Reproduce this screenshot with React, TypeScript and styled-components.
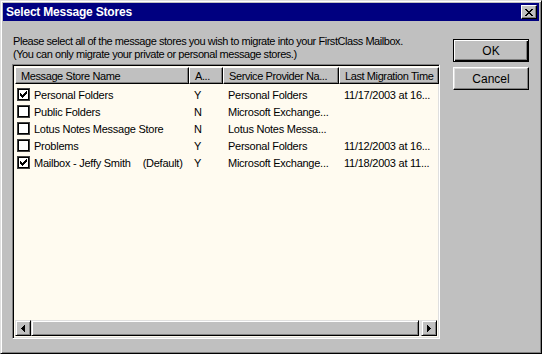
import React from "react";
import styled, { createGlobalStyle } from "styled-components";

const GlobalStyle = createGlobalStyle`
  html, body { margin: 0; padding: 0; background: #c0c0c0; }
  body { font-family: "Liberation Sans", Arial, sans-serif; font-size: 11px; letter-spacing: -0.25px; }
`;

const Window = styled.div`
  width: 542px;
  height: 354px;
  box-sizing: border-box;
  background: #c0c0c0;
  border-style: solid;
  border-width: 1px;
  border-color: #dfdfdf #000 #000 #dfdfdf;
  box-shadow: inset 1px 1px 0 #fff, inset -1px -1px 0 #808080;
  padding: 2px;
  display: flex;
  flex-direction: column;
`;

const TitleBar = styled.div`
  height: 18px;
  background: #000080;
  display: flex;
  align-items: center;
  justify-content: space-between;
  padding: 0 2px 0 3px;
`;

const Title = styled.span`
  color: #fff;
  font-weight: bold;
  font-size: 12px;
  letter-spacing: -0.2px;
`;

const CloseButton = styled.div`
  width: 16px;
  height: 14px;
  box-sizing: border-box;
  background: #c0c0c0;
  border-style: solid;
  border-width: 1px;
  border-color: #fff #000 #000 #fff;
  box-shadow: inset -1px -1px 0 #808080;
  display: flex;
  align-items: center;
  justify-content: center;
`;

const Body = styled.div`
  flex: 1;
  display: flex;
  justify-content: space-between;
  padding: 14px 10px 12px 9px;
`;

const Main = styled.div`
  display: flex;
  flex-direction: column;
`;

const Intro = styled.p`
  margin: 0 0 3px 1px;
  line-height: 13px;
  color: #000;
  white-space: nowrap;
  letter-spacing: -0.45px;
`;

const ListFrame = styled.div`
  flex: 1;
  width: 428px;
  box-sizing: border-box;
  border-style: solid;
  border-width: 1px;
  border-color: #808080 #fff #fff #808080;
  box-shadow: inset 1px 1px 0 #000, inset -1px -1px 0 #dfdfdf;
  padding: 2px;
  background: #fffbf0;
  display: flex;
  flex-direction: column;
`;

const Grid = styled.div`
  flex: 1;
  display: flex;
  flex-direction: column;
`;

const HeaderRow = styled.div`
  display: grid;
  grid-template-columns: 174px 34px 116px 100px;
  height: 17px;
`;

const HeaderCell = styled.div`
  box-sizing: border-box;
  background: #c0c0c0;
  border-style: solid;
  border-width: 1px;
  border-color: #fff #000 #000 #fff;
  box-shadow: inset -1px -1px 0 #808080;
  padding: 1px 0 0 5px;
  line-height: 14px;
  white-space: nowrap;
  overflow: hidden;
  letter-spacing: -0.4px;
`;

const Rows = styled.div`
  padding-top: 2px;
`;

const Row = styled.div`
  display: grid;
  grid-template-columns: 174px 34px 116px 100px;
  height: 17px;
  align-items: center;
`;

const Cell = styled.div<{ $pad?: number }>`
  padding-left: ${(p) => p.$pad ?? 5}px;
  white-space: nowrap;
  display: flex;
  align-items: center;
  gap: 4px;
`;

const Check = styled.div`
  width: 13px;
  height: 13px;
  box-sizing: border-box;
  border: 1px solid #404040;
  box-shadow: inset 0 0 0 1px #000;
  background: #fff;
  display: flex;
  align-items: center;
  justify-content: center;
`;

const Default = styled.span`
  margin-left: 12px;
`;

const ScrollBar = styled.div`
  display: flex;
  height: 16px;
  background: #e0e0e0;
`;

const ArrowButton = styled.div`
  width: 16px;
  height: 16px;
  box-sizing: border-box;
  background: #c0c0c0;
  border-style: solid;
  border-width: 1px;
  border-color: #dfdfdf #000 #000 #dfdfdf;
  box-shadow: inset 1px 1px 0 #fff, inset -1px -1px 0 #808080;
  display: flex;
  align-items: center;
  justify-content: center;
`;

const Thumb = styled.div`
  width: 388px;
  height: 16px;
  box-sizing: border-box;
  background: #c0c0c0;
  border-style: solid;
  border-width: 1px;
  border-color: #dfdfdf #000 #000 #dfdfdf;
  box-shadow: inset 1px 1px 0 #fff, inset -1px -1px 0 #808080;
`;

const Track = styled.div`
  flex: 1;
`;

const Side = styled.div`
  display: flex;
  flex-direction: column;
  gap: 5px;
  padding-top: 4px;
`;

const Button = styled.div<{ $default?: boolean }>`
  width: 76px;
  height: 23px;
  box-sizing: border-box;
  background: #c0c0c0;
  border: 1px solid #000;
  border-color: ${(p) => (p.$default ? "#000" : "#fff #000 #000 #fff")};
  box-shadow: ${(p) =>
    p.$default
      ? "inset 1px 1px 0 #fff, inset -1px -1px 0 #000, inset -2px -2px 0 #808080"
      : "inset -1px -1px 0 #808080, inset 1px 1px 0 #dfdfdf"};
  display: flex;
  align-items: center;
  justify-content: center;
  font-size: 12px;
  letter-spacing: 0;
`;

const CheckMark = () => (
  <svg width="7" height="7" viewBox="0 0 7 7">
    <path d="M0 2h1v1h1v1h1V3h1V2h1V1h1V0h1v3H6v1H5v1H4v1H3v1H2V6H1V5H0z" fill="#000" />
  </svg>
);

const stores = [
  { name: "Personal Folders", checked: true, a: "Y", provider: "Personal Folders", last: "11/17/2003 at 16..." },
  { name: "Public Folders", checked: false, a: "N", provider: "Microsoft Exchange...", last: "" },
  { name: "Lotus Notes Message Store", checked: false, a: "N", provider: "Lotus Notes Messa...", last: "" },
  { name: "Problems", checked: false, a: "Y", provider: "Personal Folders", last: "11/12/2003 at 16..." },
  { name: "Mailbox - Jeffy Smith", checked: true, a: "Y", provider: "Microsoft Exchange...", last: "11/18/2003 at 11...", isDefault: true },
];

export default function App() {
  return (
    <>
      <GlobalStyle />
      <Window>
        <TitleBar>
          <Title>Select Message Stores</Title>
          <CloseButton>
            <svg width="8" height="7" viewBox="0 0 8 7">
              <path d="M0 0h2v1h1v1h2V1h1V0h2v1H7v1H6v1H5v1h1v1h1v1h1v1H6V6H5V5H3v1H2v1H0V6h1V5h1V4h1V3H2V2H1V1H0z" fill="#000" />
            </svg>
          </CloseButton>
        </TitleBar>
        <Body>
          <Main>
            <Intro>
              Please select all of the message stores you wish to migrate into your FirstClass Mailbox.
              <br />
              (You can only migrate your private or personal message stores.)
            </Intro>
            <ListFrame>
              <Grid>
                <HeaderRow>
                  <HeaderCell>Message Store Name</HeaderCell>
                  <HeaderCell>A...</HeaderCell>
                  <HeaderCell>Service Provider Na...</HeaderCell>
                  <HeaderCell>Last Migration Time</HeaderCell>
                </HeaderRow>
                <Rows>
                  {stores.map((s) => (
                    <Row key={s.name}>
                      <Cell $pad={2}>
                        <Check>{s.checked && <CheckMark />}</Check>
                        <span>
                          {s.name}
                          {s.isDefault && <Default>(Default)</Default>}
                        </span>
                      </Cell>
                      <Cell>{s.a}</Cell>
                      <Cell>{s.provider}</Cell>
                      <Cell>{s.last}</Cell>
                    </Row>
                  ))}
                </Rows>
              </Grid>
              <ScrollBar>
                <ArrowButton>
                  <svg width="4" height="7" viewBox="0 0 4 7">
                    <path d="M3 0h1v7H3V6H2V5H1V4H0V3h1V2h1V1h1z" fill="#000" />
                  </svg>
                </ArrowButton>
                <Thumb />
                <Track />
                <ArrowButton>
                  <svg width="4" height="7" viewBox="0 0 4 7">
                    <path d="M0 0h1v1h1v1h1v1h1v1H3v1H2v1H1v1H0z" fill="#000" />
                  </svg>
                </ArrowButton>
              </ScrollBar>
            </ListFrame>
          </Main>
          <Side>
            <Button $default>OK</Button>
            <Button>Cancel</Button>
          </Side>
        </Body>
      </Window>
    </>
  );
}
